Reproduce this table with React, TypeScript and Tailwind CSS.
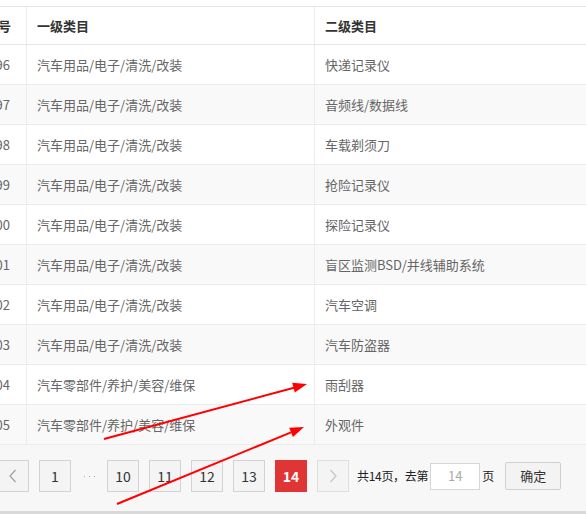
import React from "react";

const rows: [string, string, string][] = [
  ["1096", "汽车用品/电子/清洗/改装", "快递记录仪"],
  ["1097", "汽车用品/电子/清洗/改装", "音频线/数据线"],
  ["1098", "汽车用品/电子/清洗/改装", "车载剃须刀"],
  ["1099", "汽车用品/电子/清洗/改装", "抢险记录仪"],
  ["1100", "汽车用品/电子/清洗/改装", "探险记录仪"],
  ["1101", "汽车用品/电子/清洗/改装", "盲区监测BSD/并线辅助系统"],
  ["1102", "汽车用品/电子/清洗/改装", "汽车空调"],
  ["1103", "汽车用品/电子/清洗/改装", "汽车防盗器"],
  ["1104", "汽车零部件/养护/美容/维保", "雨刮器"],
  ["1105", "汽车零部件/养护/美容/维保", "外观件"],
];

const font = { fontFamily: '"Noto Sans CJK SC", "Noto Sans", sans-serif' };

function Chevron({ dir }: { dir: "left" | "right" }) {
  return (
    <svg width="10" height="16" viewBox="0 0 10 16" fill="none">
      {dir === "left" ? (
        <path d="M7.5 2 L2 8 L7.5 14" stroke="#a0a0a0" strokeWidth="1.2" />
      ) : (
        <path d="M2.5 2 L8 8 L2.5 14" stroke="#c4c4c4" strokeWidth="1.2" />
      )}
    </svg>
  );
}

export default function App() {
  return (
    <div
      className="relative w-[586px] h-[514px] overflow-hidden bg-white flex flex-col"
      style={font}
    >
      <div className="h-[6px] shrink-0 bg-white" />
      <div className="flex flex-col ml-[-40px] w-[700px] border-t border-[#e6e6e6]">
        <div className="flex h-[38px] border-b border-[#e6e6e6] bg-white text-[13px] font-semibold text-[#333]">
          <div className="w-[67px] shrink-0 border-r border-[#ececec] flex items-center justify-end pr-[15px]">
            序号
          </div>
          <div className="w-[288px] shrink-0 border-r border-[#ececec] flex items-center pl-[10px]">
            一级类目
          </div>
          <div className="flex-1 flex items-center pl-[10px]">二级类目</div>
        </div>
        {rows.map((r, i) => (
          <div
            key={r[0]}
            className={`flex h-[40px] border-b border-[#ececec] text-[13px] text-[#666] ${
              i % 2 === 1 ? "bg-[#f9f9f9]" : "bg-white"
            }`}
          >
            <div className="w-[67px] shrink-0 border-r border-[#ececec] flex items-center justify-end pr-[16px]">
              {r[0]}
            </div>
            <div className="w-[288px] shrink-0 border-r border-[#ececec] flex items-center pl-[10px]">
              {r[1]}
            </div>
            <div className="flex-1 flex items-center pl-[10px]">{r[2]}</div>
          </div>
        ))}
      </div>
      <div className="flex-1 bg-[#f7f7f7] flex items-start pt-[15px] ml-[-3px]">
        <div className="flex items-center">
          <div className="w-[32px] h-[32px] border border-[#d3d3d3] bg-[#f4f4f4] flex items-center justify-center">
            <Chevron dir="left" />
          </div>
          <div className="ml-[10px] w-[32px] h-[32px] border border-[#d3d3d3] bg-[#f4f4f4] flex items-center justify-center text-[14px] text-[#333]">
            1
          </div>
          <div className="w-[36px] h-[32px] flex items-center justify-center gap-[4px]">
            <span className="w-[1px] h-[1px] bg-[#aaa]" />
            <span className="w-[1px] h-[1px] bg-[#aaa]" />
            <span className="w-[1px] h-[1px] bg-[#aaa]" />
          </div>
          {["10", "11", "12", "13"].map((p) => (
            <div
              key={p}
              className="mr-[10px] w-[32px] h-[32px] border border-[#d3d3d3] bg-[#f4f4f4] flex items-center justify-center text-[14px] text-[#333]"
            >
              {p}
            </div>
          ))}
          <div className="w-[32px] h-[32px] bg-[#e03535] flex items-center justify-center text-[14px] font-bold text-white">
            14
          </div>
          <div className="ml-[10px] w-[32px] h-[32px] border border-[#dedede] bg-[#f4f4f4] flex items-center justify-center">
            <Chevron dir="right" />
          </div>
          <div className="ml-[8px] text-[12px] text-[#222] tracking-[-0.3px]">共14页，去第</div>
          <div className="ml-[2px] w-[50px] h-[27px] border border-[#d6d6d6] bg-white flex items-center justify-center text-[13px] text-[#aaa]">
            14
          </div>
          <div className="ml-[2px] text-[12px] text-[#222]">页</div>
          <div className="ml-[11px] w-[56px] h-[28px] border border-[#d0d0d0] rounded-[2px] bg-[#f3f3f3] flex items-center justify-center text-[13px] text-[#333]">
            确定
          </div>
        </div>
      </div>
      <div className="h-[3px] shrink-0 bg-[#d9d9d9]" />
      <svg
        className="absolute left-0 top-0 pointer-events-none"
        width="586"
        height="514"
        viewBox="0 0 586 514"
      >
        <line x1="104" y1="439" x2="294" y2="387.7" stroke="#ff0000" strokeWidth="2" />
        <polygon points="307,384 294.8,392.5 292.2,382.8" fill="#ff0000" />
        <line x1="117" y1="504" x2="291" y2="432.3" stroke="#ff0000" strokeWidth="2" />
        <polygon points="304,427 292.95,436.9 289.15,427.7" fill="#ff0000" />
      </svg>
    </div>
  );
}
